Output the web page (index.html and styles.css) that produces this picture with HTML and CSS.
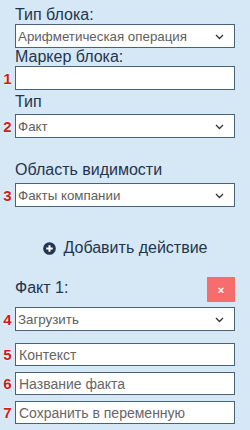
FILE: index.html
```html
<!DOCTYPE html>
<html lang="ru">
<head>
    <meta charset="UTF-8" />
    <meta name="viewport" content="width=device-width, initial-scale=1.0" />
    <title>Блок</title>
    <link rel="stylesheet" href="styles.css">
</head>
<body>

<div class="panel">
    <label class="lbl lbl-first">Тип блока:</label>
    <div class="row">
        <span class="num"></span>
        <div class="sel">
            <select>
                <option>Арифметическая операция</option>
            </select>
            <svg class="chev" width="9" height="6" viewBox="0 0 9 6"><path d="M1 1l3.5 3.5L8 1" fill="none" stroke="#333" stroke-width="1.3"/></svg>
        </div>
    </div>

    <label class="lbl">Маркер блока:</label>
    <div class="row">
        <span class="num">1</span>
        <input type="text" class="inp inp-tall" />
    </div>

    <label class="lbl lbl-type">Тип</label>
    <div class="row">
        <span class="num">2</span>
        <div class="sel">
            <select>
                <option>Факт</option>
            </select>
            <svg class="chev" width="9" height="6" viewBox="0 0 9 6"><path d="M1 1l3.5 3.5L8 1" fill="none" stroke="#333" stroke-width="1.3"/></svg>
        </div>
    </div>

    <label class="lbl lbl-scope">Область видимости</label>
    <div class="row">
        <span class="num">3</span>
        <div class="sel">
            <select>
                <option>Факты компании</option>
            </select>
            <svg class="chev" width="9" height="6" viewBox="0 0 9 6"><path d="M1 1l3.5 3.5L8 1" fill="none" stroke="#333" stroke-width="1.3"/></svg>
        </div>
    </div>

    <div class="add">
        <svg width="13" height="13" viewBox="0 0 14 14"><circle cx="7" cy="7" r="6.8" fill="#1f3550"/><path d="M7 3.5v7M3.5 7h7" stroke="#fff" stroke-width="2.2"/></svg>
        <span>Добавить действие</span>
    </div>

    <div class="fact-head">
        <span class="fact-title">Факт 1:</span>
        <button type="button" class="del">×</button>
    </div>

    <div class="row">
        <span class="num">4</span>
        <div class="sel">
            <select>
                <option>Загрузить</option>
            </select>
            <svg class="chev" width="9" height="6" viewBox="0 0 9 6"><path d="M1 1l3.5 3.5L8 1" fill="none" stroke="#333" stroke-width="1.3"/></svg>
        </div>
    </div>

    <div class="row row-first">
        <span class="num">5</span>
        <input type="text" class="inp" placeholder="Контекст" />
    </div>
    <div class="row row-gap">
        <span class="num">6</span>
        <input type="text" class="inp" placeholder="Название факта" />
    </div>
    <div class="row row-gap">
        <span class="num">7</span>
        <input type="text" class="inp" placeholder="Сохранить в переменную" />
    </div>
</div>

</body>
</html>
```

FILE: styles.css
```css
body {
    margin: 0;
    background-color: #d6e8f5;
    font-family: "Liberation Sans", Arial, sans-serif;
    color: #1f3550;
}
.panel {
    padding: 6px 15px 0 0;
}
.lbl {
    display: block;
    margin-left: 15px;
    font-size: 16px;
    line-height: 18px;
}
.lbl-type {
    margin-top: 3px;
    margin-bottom: 3px;
}
.lbl-scope {
    margin-top: 23px;
    margin-bottom: 4px;
}
.row {
    display: flex;
    align-items: center;
}
.row-first {
    margin-top: 12px;
}
.row-gap {
    margin-top: 6px;
}
.num {
    width: 15px;
    flex: none;
    text-align: center;
    font-size: 15px;
    font-weight: bold;
    color: #d11a1a;
    text-shadow: 0 0 2px #fff, 0 0 1px #fff;
}
.sel {
    position: relative;
    flex: 1;
}
select {
    display: block;
    width: 100%;
    height: 24px;
    margin: 0;
    padding: 0 20px 0 2px;
    border: 1px solid #46637d;
    border-radius: 0;
    background: #fff;
    font-family: "Liberation Sans", Arial, sans-serif;
    font-size: 13.33px;
    color: #606060;
    appearance: none;
    -webkit-appearance: none;
}
.chev {
    position: absolute;
    right: 11px;
    top: 10px;
    pointer-events: none;
}
.inp {
    flex: 1;
    min-width: 0;
    height: 23px;
    margin: 0;
    padding: 0 3px;
    border: 1px solid #46637d;
    border-radius: 0;
    background: #fff;
    box-sizing: border-box;
    font-family: "Liberation Sans", Arial, sans-serif;
    font-size: 14px;
    color: #333;
}
.inp-tall {
    height: 24px;
}
.inp::placeholder {
    color: #666;
}
.add {
    display: flex;
    align-items: center;
    justify-content: center;
    gap: 8px;
    margin: 32px 0 0 15px;
    font-size: 16px;
    line-height: 18px;
}
.fact-head {
    display: flex;
    justify-content: space-between;
    align-items: flex-start;
    margin: 20px 0 5px 15px;
}
.fact-title {
    padding-top: 2px;
    font-size: 16px;
    line-height: 18px;
}
.del {
    width: 28px;
    height: 25px;
    padding: 0;
    border: none;
    border-radius: 0;
    background-color: #f66d6d;
    color: #fff;
    font-family: "Liberation Sans", Arial, sans-serif;
    font-size: 11px;
    font-weight: bold;
    cursor: pointer;
}
```
